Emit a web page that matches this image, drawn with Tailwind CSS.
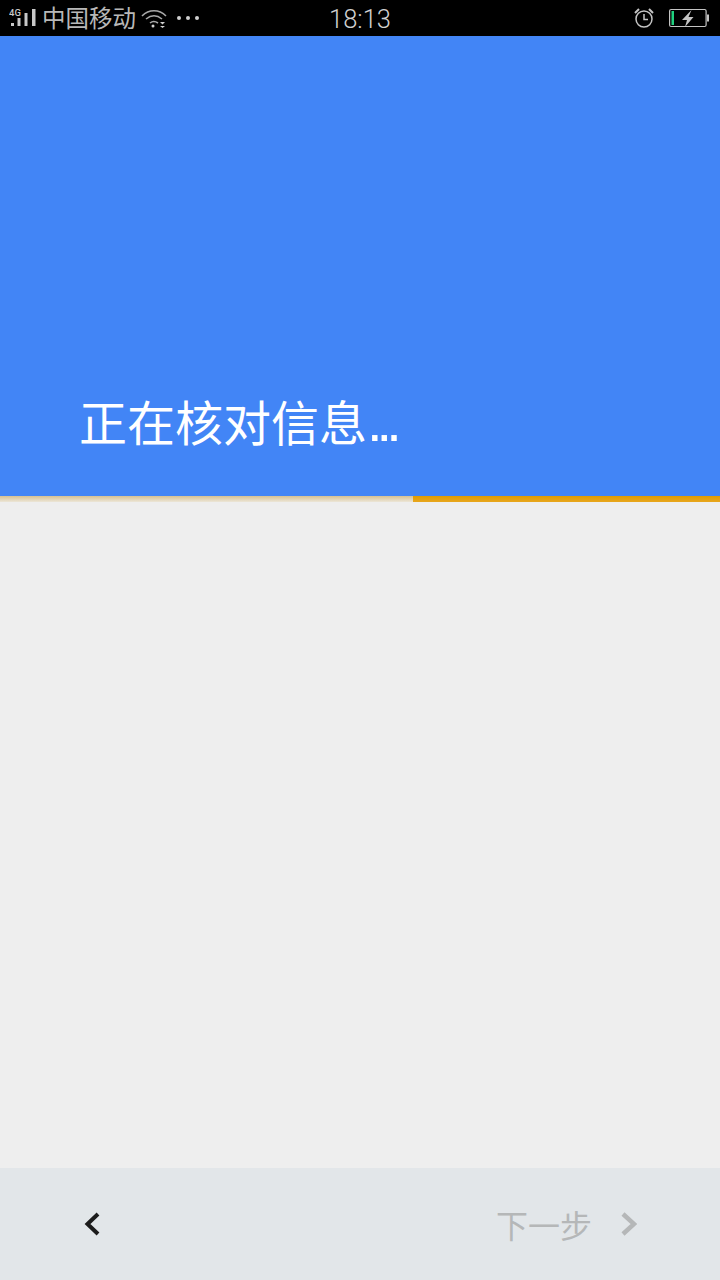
<!DOCTYPE html>
<html lang="zh">
<head>
    <meta charset="UTF-8">
    <title>正在核对信息</title>
    <script src="https://cdn.jsdelivr.net/npm/@tailwindcss/browser@4"></script>
</head>
<body class="bg-[#eeeeee] font-['Roboto','Noto_Sans_CJK_SC',sans-serif]">
    <div class="w-[720px] h-[1280px] flex flex-col overflow-hidden">
        <!-- status bar -->
        <div class="h-9 bg-black flex items-center justify-between text-[#c8c8c8] shrink-0">
            <div class="w-[280px] flex items-center">
                <svg class="ml-[9px]" width="29" height="24" viewBox="0 0 29 24" fill="#c8c8c8">
                    <text x="0" y="9.500" font-size="9.500" font-family="Roboto" font-weight="500">4G</text>
                    <rect x="2" y="17" width="3" height="3"/>
                    <rect x="8.500" y="12" width="3" height="8"/>
                    <rect x="15.500" y="7" width="3" height="13"/>
                    <rect x="23" y="3" width="3.500" height="17"/>
                </svg>
                <span class="ml-[4px] text-[23.5px] leading-none font-['Noto_Sans_CJK_SC',sans-serif] font-normal text-[#b8b8b8]">中国移动</span>
                <svg class="ml-[5px]" width="26" height="22" viewBox="0 0 26 22" fill="none" stroke="#a8a8a8" stroke-width="1.600">
                    <path d="M1 9c7-7 17-7 24 0"/>
                    <path d="M5 12c5-4 11-4 16 0"/>
                    <path d="M9 16c2.500-2 5-2 8 0"/>
                    <circle cx="12" cy="19" r="1.500" fill="#d0d0d0" stroke="none"/>
                    <path d="M19 15h5l-2.500 2.500z" fill="#d0d0d0" stroke="none"/>
                    <path d="M19 19h5l-2.500 2z" fill="#d0d0d0" stroke="none"/>
                </svg>
                <div class="ml-[10px] flex gap-[5px]">
                    <span class="w-[4px] h-[4px] rounded-full bg-[#d0d0d0]"></span>
                    <span class="w-[4px] h-[4px] rounded-full bg-[#d0d0d0]"></span>
                    <span class="w-[4px] h-[4px] rounded-full bg-[#d0d0d0]"></span>
                </div>
            </div>
            <span class="text-[25.5px] leading-none font-light mt-[4px] text-[#d0d0d0]">18:13</span>
            <div class="w-[280px] flex items-center justify-end pr-[11px]">
                <svg class="mr-[1px]" width="22" height="22" viewBox="0 0 22 22" fill="none" stroke="#c4c4c4" stroke-width="1.500">
                    <circle cx="11" cy="12" r="8"/>
                    <path d="M11 7v5.500h4"/>
                    <path d="M2 6l4-4M20 6l-4-4" stroke-width="2"/>
                </svg>
                <svg class="ml-[13px]" width="40" height="20" viewBox="0 0 40 20">
                    <rect x="0.600" y="1.500" width="36.500" height="17" rx="1.500" fill="none" stroke="#c4c4c4" stroke-width="1.200"/>
                    <rect x="2.500" y="3" width="2.500" height="14" fill="#1fd07f"/>
                    <rect x="38" y="6.500" width="2" height="7" fill="#c4c4c4"/>
                    <path d="M22.500 2l-9.500 10h5l-2 7 8.500-10h-5z" fill="#c4c4c4"/>
                </svg>
            </div>
        </div>

        <!-- header -->
        <div class="h-[460px] bg-[#4285f6] flex items-end pl-[79px] pb-[46px] shrink-0">
            <h1 class="text-[48px] leading-[56px] font-normal text-white font-['Noto_Sans_CJK_SC',sans-serif]">正在核对信息<span class="text-[56px] tracking-[-6px] font-['Liberation_Sans',sans-serif]">...</span></h1>
        </div>

        <!-- progress -->
        <div class="h-[6px] flex shrink-0">
            <div class="w-[413px] bg-gradient-to-b from-[#d6c193] to-[#ece6d8]"></div>
            <div class="flex-1 bg-gradient-to-b from-[#e09c00] to-[#e8a61c]"></div>
        </div>

        <div class="flex-1"></div>

        <!-- bottom bar -->
        <div class="h-[112px] bg-[#e2e6e9] flex items-center justify-between pl-[84px] pr-[83px] shrink-0">
            <svg width="16" height="24" viewBox="0 0 16 24" fill="none" stroke="#1c1c1c" stroke-width="4">
                <path d="M14 2L3.500 12 14 22"/>
            </svg>
            <div class="flex items-center">
                <span class="text-[32px] leading-none font-normal text-[#b5b7b8] font-['Noto_Sans_CJK_SC',sans-serif]">下一步</span>
                <svg class="ml-[28px]" width="17" height="24" viewBox="0 0 17 24" fill="none" stroke="#b5b7b8" stroke-width="4.500">
                    <path d="M3 2l11 10L3 22"/>
                </svg>
            </div>
        </div>
    </div>
</body>
</html>
